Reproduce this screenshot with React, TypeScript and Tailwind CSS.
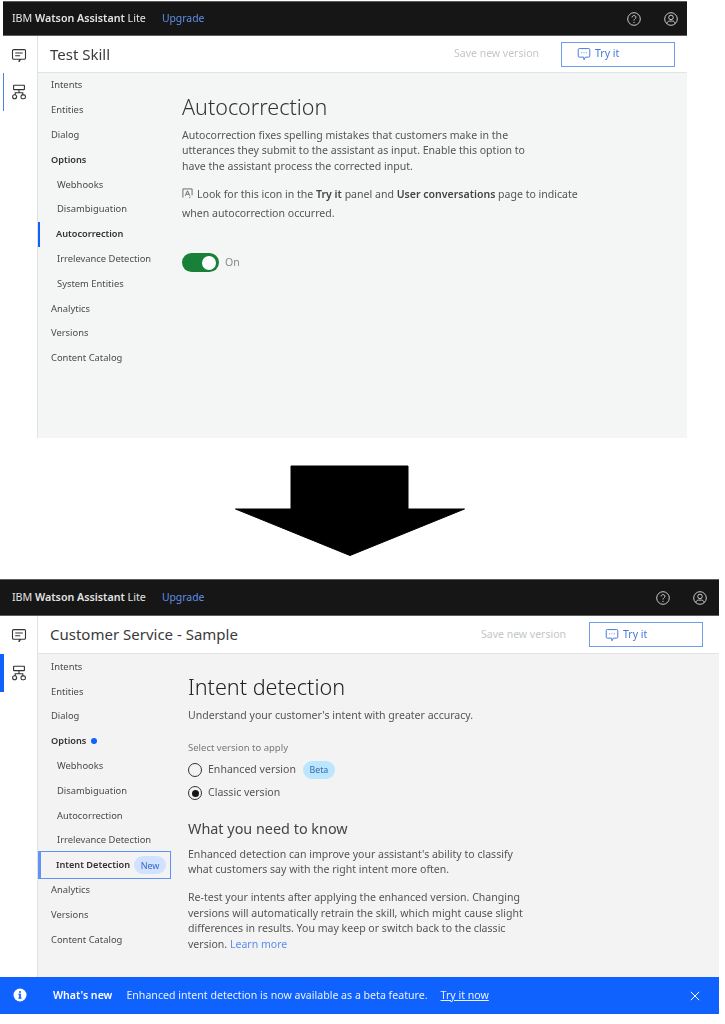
import type { ReactNode } from "react";

const SANS = "font-['Noto_Sans','Liberation_Sans',sans-serif]";

function ChatIcon({ className }: { className?: string }) {
  return (
    <svg viewBox="0 0 16 16" fill="none" stroke="currentColor" strokeWidth="1.1" className={className}>
      <path d="M2.8 2.6h10.4a1.3 1.3 0 0 1 1.3 1.3v7a1.3 1.3 0 0 1-1.3 1.3H9.6l-1.4 2.2H8l.8-2.2H2.8a1.3 1.3 0 0 1-1.3-1.3v-7a1.3 1.3 0 0 1 1.3-1.3Z" />
      <path d="M4.2 6h7.6M4.2 8.8h5" />
    </svg>
  );
}

function SkillIcon({ className }: { className?: string }) {
  return (
    <svg viewBox="0 0 16 16" fill="none" stroke="currentColor" strokeWidth="1.1" className={className}>
      <rect x="2.6" y="1.2" width="10.8" height="4.4" rx="0.4" />
      <path d="M8 5.6v3.2M4.2 11V8.8h7.6V11" />
      <circle cx="3.6" cy="12.8" r="2" />
      <rect x="10" y="10.9" width="4.4" height="3.9" rx="1.6" />
    </svg>
  );
}

function HelpIcon({ className }: { className?: string }) {
  return (
    <svg viewBox="0 0 16 16" fill="none" stroke="currentColor" strokeWidth="1" className={className}>
      <circle cx="8" cy="8" r="7.2" />
      <path d="M5.8 6.2c0-1.3 1-2.1 2.2-2.1s2.2.8 2.2 2c0 1.7-2.2 1.7-2.2 3.6" />
      <circle cx="8" cy="11.8" r="0.7" fill="currentColor" stroke="none" />
    </svg>
  );
}

function UserIcon({ className }: { className?: string }) {
  return (
    <svg viewBox="0 0 16 16" fill="none" stroke="currentColor" strokeWidth="1" className={className}>
      <circle cx="8" cy="8" r="7.2" />
      <circle cx="8" cy="6.2" r="2.6" />
      <path d="M3.4 13.2c.3-2 1.5-2.8 2.8-2.8h3.6c1.3 0 2.5.8 2.8 2.8" />
    </svg>
  );
}

function TryItIcon({ className }: { className?: string }) {
  return (
    <svg viewBox="0 0 16 16" fill="none" stroke="currentColor" strokeWidth="1.1" className={className}>
      <path d="M2.6 1.8h10.8a1.2 1.2 0 0 1 1.2 1.2v7.4a1.2 1.2 0 0 1-1.2 1.2H9.6L8 14.6l-.4-3H2.6a1.2 1.2 0 0 1-1.2-1.2V3a1.2 1.2 0 0 1 1.2-1.2Z" />
      <circle cx="5.4" cy="6.6" r="0.6" fill="currentColor" stroke="none" />
      <circle cx="8" cy="6.6" r="0.6" fill="currentColor" stroke="none" />
      <circle cx="10.6" cy="6.6" r="0.6" fill="currentColor" stroke="none" />
    </svg>
  );
}

function TopBar({ className }: { className: string }) {
  return (
    <div className={`flex items-center justify-between border-y border-[#5c5c5c] bg-[#161616] text-[10.7px] text-[#e4e4e4] ${className}`}>
      <div className="flex items-center">
        <span>
          IBM <span className="font-semibold">Watson Assistant</span> Lite
        </span>
        <span className="ml-[16px] text-[10.4px] text-[#5f8fe8]">Upgrade</span>
      </div>
      <div className="flex items-center gap-[23px]">
        <HelpIcon className="size-[14px]" />
        <UserIcon className="size-[14px]" />
      </div>
    </div>
  );
}

function Rail({ thick, firstRow }: { thick: boolean; firstRow: string }) {
  return (
    <div className="flex w-[38px] shrink-0 flex-col border-r border-[#dfe1e3] text-[#333]">
      <div className={`flex items-center justify-center ${firstRow}`}>
        <ChatIcon className="size-[16px]" />
      </div>
      <div className="flex h-[38px] items-center">
        <div className={thick ? "mr-auto h-full w-[4px] bg-[#0f62fe]" : "ml-[3px] mr-auto h-full w-[1px] bg-[#4a7fe0]"} />
        <SkillIcon className="mr-[10px] size-[16px]" />
      </div>
    </div>
  );
}

function SubHeader({ title, className, tryGap }: { title: string; className: string; tryGap: string }) {
  return (
    <div className={`flex items-center justify-between border-b border-[#e2e3e4] bg-white pl-[12px] ${className}`}>
      <span className="text-[15px] text-[#3a3a3a]">{title}</span>
      <div className="flex items-center">
        <span className="text-[10.5px] text-[#c4c6c8]">Save new version</span>
        <div className={`flex h-[25px] w-[114px] items-center border border-[#6e9bea] pl-[15px] text-[10.5px] text-[#4477dd] ${tryGap}`}>
          <TryItIcon className="mr-[4px] size-[14px]" />
          Try it
        </div>
      </div>
    </div>
  );
}

function NavRow({ children, bold, sub }: { children: ReactNode; bold?: boolean; sub?: boolean }) {
  return (
    <div className={`flex h-[24.8px] items-center ${sub ? "pl-[19px]" : "pl-[13px]"} ${bold ? "text-[9.2px] font-semibold text-[#333]" : "text-[9.4px] text-[#4a4a4a]"}`}>
      {children}
    </div>
  );
}

function TopShot() {
  return (
    <section className="w-[687px] blur-[0.35px]">
      <div className="pl-[3px] pt-[1px]">
        <TopBar className="h-[35px] pl-[9px] pr-[9px]" />
      </div>
      <div className="flex">
        <Rail thick={false} firstRow="h-[37px]" />
        <div className="flex-1">
          <SubHeader title="Test Skill" className="h-[37px]" tryGap="ml-[22px] mr-[12px]" />
          <div className="flex h-[365px] bg-[#f4f5f5]">
            <nav className="w-[144px]">
              <NavRow>Intents</NavRow>
              <NavRow>Entities</NavRow>
              <NavRow>Dialog</NavRow>
              <NavRow bold>Options</NavRow>
              <NavRow sub>Webhooks</NavRow>
              <NavRow sub>Disambiguation</NavRow>
              <div className="flex h-[24.8px] items-center border-l-[2px] border-[#0f62fe] pl-[16px] text-[9.2px] font-semibold text-[#333]">
                Autocorrection
              </div>
              <NavRow sub>Irrelevance Detection</NavRow>
              <NavRow sub>System Entities</NavRow>
              <NavRow>Analytics</NavRow>
              <NavRow>Versions</NavRow>
              <NavRow>Content Catalog</NavRow>
            </nav>
            <div className="flex-1 pt-[19px] text-[10.55px] text-[#555]">
              <h1 className="text-[21.5px] font-light leading-[30px] text-[#333]">Autocorrection</h1>
              <p className="mt-[5.5px] w-[360px] leading-[15.6px]">
                Autocorrection fixes spelling mistakes that customers make in the utterances they submit to the assistant as input. Enable this option to have the assistant process the corrected input.
              </p>
              <p className="mt-[11px] w-[410px] leading-[18.5px]">
                <svg viewBox="0 0 12 12" fill="none" stroke="currentColor" strokeWidth="0.9" className="mr-[4px] inline size-[11px] align-[-1px]">
                  <path d="M1 10.5V1h10v7M3.5 8.5 6 3l2.5 5.5M4.5 6.8h3M9 9.5l-1 1.5" />
                </svg>
                Look for this icon in the <b className="font-semibold text-[#444]">Try it</b> panel and <b className="font-semibold text-[#444]">User conversations</b> page to indicate when autocorrection occurred.
              </p>
              <div className="mt-[31px] flex items-center">
                <div className="flex h-[19px] w-[37px] items-center justify-end rounded-full bg-[#198038] pr-[3px]">
                  <div className="size-[14px] rounded-full bg-white" />
                </div>
                <span className="ml-[6px] text-[#888]">On</span>
              </div>
            </div>
          </div>
        </div>
      </div>
    </section>
  );
}

function Arrow() {
  return (
    <div className="ml-[235px] mb-[23px] mt-[27px] h-[91px] w-[230px]">
      <svg viewBox="0 0 230 91" className="size-full" fill="#000" stroke="#000" strokeWidth="1" strokeLinejoin="round">
        <path d="M56 1h117v43h56.500L115 90.500.5 44H56Z" />
      </svg>
    </div>
  );
}

function Radio({ on, label, children }: { on: boolean; label: string; children?: ReactNode }) {
  return (
    <div className="flex h-[23px] items-center">
      <div className="flex size-[14px] items-center justify-center rounded-full border border-[#333] bg-transparent">
        {on && <div className="size-[7px] rounded-full bg-[#161616]" />}
      </div>
      <span className="ml-[6px] text-[#555]">{label}</span>
      {children}
    </div>
  );
}

function BottomShot() {
  return (
    <section className="w-[719px] blur-[0.2px]">
      <TopBar className="h-[37px] pl-[12px] pr-[12px]" />
      <div className="flex">
        <Rail thick firstRow="h-[38px]" />
        <div className="flex-1">
          <SubHeader title="Customer Service - Sample" className="h-[38px]" tryGap="ml-[23px] mr-[16px]" />
          <div className="flex h-[323px] bg-[#f3f3f3]">
            <nav className="w-[150px] pt-[0.5px]">
              <NavRow>Intents</NavRow>
              <NavRow>Entities</NavRow>
              <NavRow>Dialog</NavRow>
              <NavRow bold>
                Options
                <span className="ml-[5px] size-[6px] rounded-full bg-[#0f62fe]" />
              </NavRow>
              <NavRow sub>Webhooks</NavRow>
              <NavRow sub>Disambiguation</NavRow>
              <NavRow sub>Autocorrection</NavRow>
              <NavRow sub>Irrelevance Detection</NavRow>
              <div className="-my-[1.6px] flex h-[28px] w-[133px] items-center border border-l-[3px] border-[#5f93f5] pl-[15px] text-[9.2px] font-semibold text-[#333]">
                Intent Detection
                <span className="ml-[4px] flex h-[18px] w-[32px] items-center justify-center rounded-full bg-[#d0e2ff] text-[9px] font-normal text-[#3a66c4]">New</span>
              </div>
              <NavRow>Analytics</NavRow>
              <NavRow>Versions</NavRow>
              <NavRow>Content Catalog</NavRow>
            </nav>
            <div className="flex-1 pt-[18px] text-[10.55px] text-[#555]">
              <h1 className="text-[21.6px] font-light leading-[30px] text-[#222]">Intent detection</h1>
              <p className="mt-[6px] leading-[15.6px]">Understand your customer's intent with greater accuracy.</p>
              <p className="mt-[17px] text-[9.5px] text-[#777]">Select version to apply</p>
              <div className="mt-[4px]">
                <Radio on={false} label="Enhanced version">
                  <span className="ml-[7px] flex h-[18px] w-[32px] items-center justify-center rounded-full bg-[#bae6ff] text-[8.8px] text-[#3a66a4]">Beta</span>
                </Radio>
                <Radio on label="Classic version" />
              </div>
              <h2 className="mt-[14px] text-[14.4px] leading-[20px] text-[#444]">What you need to know</h2>
              <p className="mt-[8px] w-[345px] leading-[15.5px]">
                Enhanced detection can improve your assistant's ability to classify what customers say with the right intent more often.
              </p>
              <p className="mt-[12.500px] w-[345px] leading-[15.5px]">
                Re-test your intents after applying the enhanced version. Changing versions will automatically retrain the skill, which might cause slight differences in results. You may keep or switch back to the classic version. <span className="text-[#5b8def]">Learn more</span>
              </p>
            </div>
          </div>
        </div>
      </div>
      <div className="flex h-[37px] items-center justify-between bg-[#0f62fe] pl-[13px] pr-[19px] text-[10.6px] text-[#e8f0ff]">
        <div className="flex items-center">
          <svg viewBox="0 0 14 14" className="size-[14px]">
            <circle cx="7" cy="7" r="6.5" fill="#fff" />
            <rect x="6.1" y="5.8" width="1.8" height="4.6" fill="#0f62fe" />
            <rect x="5.2" y="5.8" width="2" height="1" fill="#0f62fe" />
            <rect x="5.2" y="9.6" width="3.6" height="1" fill="#0f62fe" />
            <circle cx="7" cy="3.9" r="1" fill="#0f62fe" />
          </svg>
          <span className="ml-[26px] font-semibold text-white">What's new</span>
          <span className="ml-[14px]">Enhanced intent detection is now available as a beta feature.</span>
          <span className="ml-[13px] underline">Try it now</span>
        </div>
        <svg viewBox="0 0 12 12" fill="none" stroke="#fff" strokeWidth="1.2" className="size-[10px]">
          <path d="M1 1l10 10M11 1 1 11" />
        </svg>
      </div>
    </section>
  );
}

export default function App() {
  return (
    <div className={`h-[1024px] w-[725px] overflow-hidden bg-white ${SANS}`}>
      <TopShot />
      <Arrow />
      <BottomShot />
    </div>
  );
}
